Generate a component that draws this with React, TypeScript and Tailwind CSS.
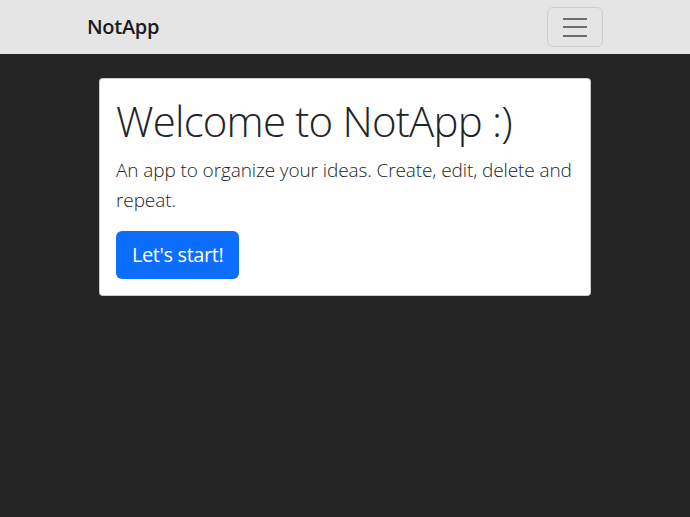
import React from "react";

export default function App() {
  const font = { fontFamily: '"Open Sans", "Noto Sans", sans-serif' };
  return (
    <div className="min-h-[517px] bg-[#252525]" style={font}>
      <nav className="h-[54px] bg-[#e5e5e5]">
        <div className="mx-auto flex h-full w-[540px] items-center justify-between px-3">
          <span className="text-[20px] font-semibold text-[#1a1a1a] tracking-[-0.3px]">NotApp</span>
          <button className="flex h-[40px] w-[56px] flex-col items-center justify-center gap-[6.5px] rounded-[6px] border border-black/10">
            <span className="block h-[2px] w-[24px] bg-[#6c6c6c]" />
            <span className="block h-[2px] w-[24px] bg-[#6c6c6c]" />
            <span className="block h-[2px] w-[24px] bg-[#6c6c6c]" />
          </button>
        </div>
      </nav>
      <div className="mx-auto w-[540px] px-3 pt-6">
        <div className="mx-3 rounded-[4px] border border-black/20 bg-white p-4">
          <h1 className="mb-2 text-[42px] font-light leading-[52px] text-[#212529] tracking-[-0.8px]">
            Welcome to NotApp :)
          </h1>
          <p className="mb-4 text-[19px] font-light leading-[30px] text-[#212529] tracking-[-0.1px]">
            An app to organize your ideas. Create, edit, delete and repeat.
          </p>
          <button className="h-[48px] rounded-[6px] bg-[#0d6efd] px-4 text-[20px] text-white tracking-[-0.4px]">
            Let's start!
          </button>
        </div>
      </div>
    </div>
  );
}
